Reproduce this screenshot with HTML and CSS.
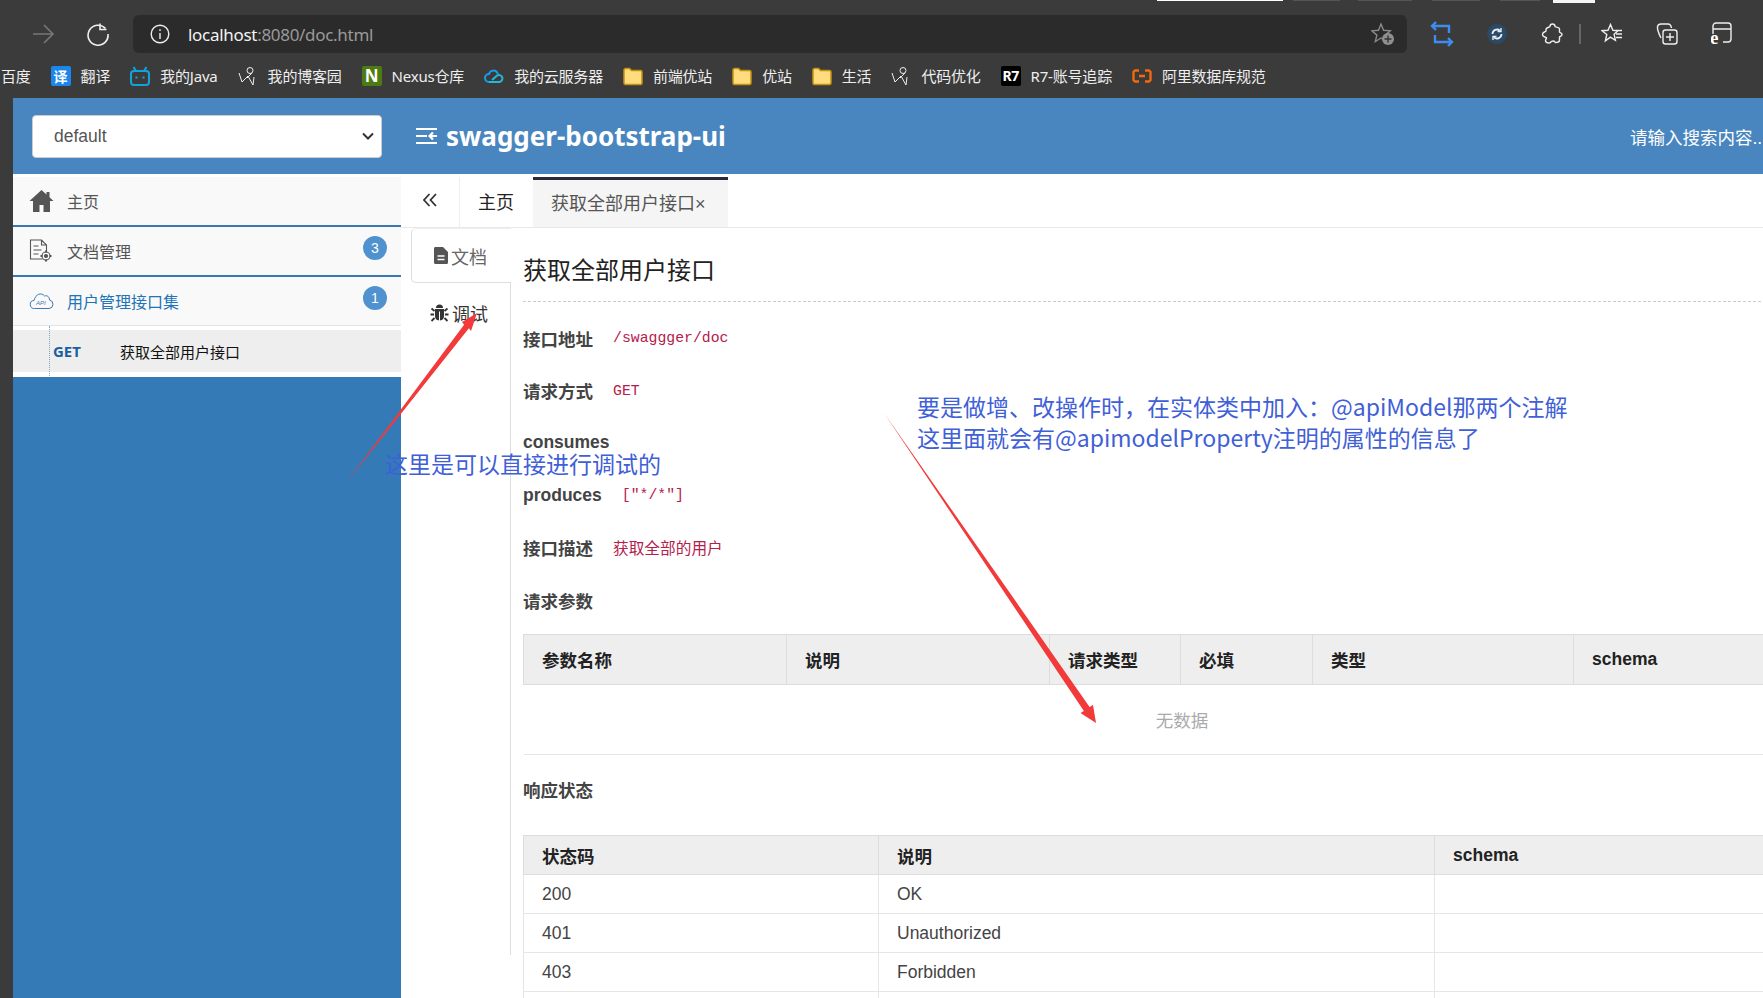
FILE: index.html
```html
<!DOCTYPE html>
<html lang="en">
<head>
    <meta charset="UTF-8">
    <meta name="viewport" content="width=device-width, initial-scale=1.0">
    <title>swagger-bootstrap-ui</title>
    <link rel="stylesheet" href="styles.css">
</head>
<body>

    <!-- Browser chrome -->
    <header class="chrome">
        <div class="tabstrip">
            <span class="sliver sliver-white"></span>
            <span class="sliver sliver-a"></span>
            <span class="sliver sliver-b"></span>
            <span class="sliver sliver-c"></span>
            <span class="sliver sliver-d"></span>
            <span class="sliver sliver-end"></span>
        </div>

        <div class="toolbar">
            <svg class="nav-back" width="24" height="24" viewBox="0 0 24 24" fill="none" stroke="#777" stroke-width="1.6"><path d="M2 12h20M13 3l9 9-9 9"/></svg>
            <svg class="nav-reload" width="24" height="24" viewBox="0 0 24 24" fill="none" stroke="#eee" stroke-width="1.6"><path d="M19.5 6.5A10 10 0 1 0 22 12"/><path d="M14 1.5v6h6.500"/></svg>
            <div class="address">
                <svg width="20" height="20" viewBox="0 0 20 20" fill="none" stroke="#eee" stroke-width="1.4"><circle cx="10" cy="10" r="8.800"/><path d="M10 9v6M10 5.200v1.800"/></svg>
                <span class="url"><b>localhost</b>:8080/doc.html</span>
                <svg class="add-fav" width="24" height="24" viewBox="0 0 24 24"><path d="M10 2l2.600 6.300 6.700.5-5.100 4.300 1.500 6.500L10 16l-5.700 3.600 1.600-6.500L.8 8.800l6.700-.5z" fill="none" stroke="#8a8a8a" stroke-width="1.400"/><circle cx="17" cy="17" r="6" fill="#8f8f8f"/><path d="M17 13.500v7M13.500 17h7" stroke="#333" stroke-width="1.400"/></svg>
            </div>
            <div class="tool-icons">
                <span class="tool"><svg width="24" height="26" viewBox="0 0 24 26" fill="none" stroke="#3f8cf0" stroke-width="2.400"><path d="M6 1L2 5l4 4M2 5h17v7M18 25l4-4-4-4M22 21H5v-7"/></svg></span>
                <span class="tool"><svg width="22" height="22" viewBox="0 0 22 22" fill="none"><circle cx="11" cy="11" r="10" fill="#2b4a66"/><path d="M6.500 11a4.500 4.500 0 0 1 7.500-3.300M15.500 11A4.500 4.500 0 0 1 8 14.300" stroke="#e8f0f6" stroke-width="1.800"/><path d="M15 5v3.500h-3.500M7 17v-3.500h3.500" stroke="#e8f0f6" stroke-width="1.400"/></svg></span>
                <span class="tool"><svg width="22" height="22" viewBox="0 0 22 22" fill="none" stroke="#eee" stroke-width="1.400"><path d="M9 3.500a2.500 2.500 0 0 1 5 0c0 .8 4.500.5 4.500 2.500v3c0 .8 2.500.3 2.500 2.500s-2.500 1.800-2.500 2.500v3c0 2-2 2.500-4 2.500-.8 0-.2-1.500-2.500-1.500S9.500 20 8.500 20c-2 0-4-.5-4-2.500 0-.8 1-1.500 1-2.500s-4-.5-4-3.500 3.500-2.500 3.500-3.500V6.500C5 4 9 4.500 9 3.500z"/></svg></span>
                <span class="tool-divider"></span>
                <span class="tool"><svg width="22" height="22" viewBox="0 0 22 22" fill="none" stroke="#eee" stroke-width="1.400"><path d="M9.500 1.500l2.400 5.800 5 .4-3.800 3.600 1.300 6-5-3.200-5 3.800 1.400-6.400L1 7.700l6-.4zM15 11h6M15 7.500h6M15 14.500h6"/></svg></span>
                <span class="tool"><svg width="22" height="22" viewBox="0 0 22 22" fill="none" stroke="#eee" stroke-width="1.400"><path d="M5 15C2 9 1 7 1.500 3.500 2 1.500 3 1 5 1h7c2 0 3 1 3.500 4"/><rect x="7" y="7" width="14" height="14" rx="2.500"/><path d="M14 10v8M10 14h8"/></svg></span>
                <span class="tool"><svg width="22" height="24" viewBox="0 0 22 24" fill="none" stroke="#eee" stroke-width="1.400"><path d="M2 12V4a3 3 0 0 1 3-3h12a3 3 0 0 1 3 3v13a3 3 0 0 1-3 3h-5M2 7h18"/><text class="ie-mark" x="-1" y="22">e</text></svg></span>
            </div>
        </div>

        <nav class="bookmarks">
            <a class="mark">百度</a>
            <a class="mark">
                <span class="mark-square mark-fanyi">译</span>翻译
            </a>
            <a class="mark">
                <svg width="20" height="20" viewBox="0 0 20 20" fill="none" stroke="#10a3dc" stroke-width="2"><rect x="1" y="5" width="18" height="14" rx="3"/><path d="M6 5L3.500 1M14 5l2.500-4M6.500 10.500v2M13.500 10.500v2"/></svg>我的Java
            </a>
            <a class="mark">
                <svg class="cnblogs" width="20" height="20" viewBox="0 0 20 20" fill="none" stroke="#eee"><circle cx="12" cy="4.500" r="3"/><path d="M1 7l3 9 6-6 5 9 1-8M14 7l-5 5"/></svg>我的博客园
            </a>
            <a class="mark">
                <span class="mark-square mark-nexus">N</span>Nexus仓库
            </a>
            <a class="mark">
                <svg width="20" height="20" viewBox="0 0 20 20" fill="none" stroke-width="2"><path d="M5 16a4 4 0 0 1 0-8c1-4 7-5 9 0" stroke="#1a9be8"/><path d="M5 16h10a3.500 3.500 0 1 0-3-5.500L8 14" stroke="#27b7d8"/></svg>我的云服务器
            </a>
            <a class="mark">
                <svg width="20" height="20" viewBox="0 0 20 20"><use href="#folder"/></svg>前端优站
            </a>
            <a class="mark">
                <svg width="20" height="20" viewBox="0 0 20 20"><use href="#folder"/></svg>优站
            </a>
            <a class="mark">
                <svg width="20" height="20" viewBox="0 0 20 20"><use href="#folder"/></svg>生活
            </a>
            <a class="mark">
                <svg class="cnblogs" width="20" height="20" viewBox="0 0 20 20" fill="none" stroke="#eee"><circle cx="12" cy="4.500" r="3"/><path d="M1 7l3 9 6-6 5 9 1-8M14 7l-5 5"/></svg>代码优化
            </a>
            <a class="mark">
                <span class="mark-square mark-r7">R7</span>R7-账号追踪
            </a>
            <a class="mark">
                <svg width="20" height="20" viewBox="0 0 20 20" fill="none" stroke="#f26a0c" stroke-width="2.400"><path d="M7 4.500H3L1.500 6v8L3 15.500h4M13 4.500h4L18.500 6v8L17 15.500h-4M7 10h6"/></svg>阿里数据库规范
            </a>
        </nav>
    </header>

    <svg class="defs" width="0" height="0">
        <symbol id="folder" viewBox="0 0 20 20">
            <path d="M1 4a1.500 1.500 0 0 1 1.500-1.500h4L8.500 4.500h9A1.500 1.500 0 0 1 19 6v11a1.500 1.500 0 0 1-1.500 1.500h-15A1.500 1.500 0 0 1 1 17z" fill="#ffdc7d" stroke="#c3920f" stroke-width="1.500"/>
        </symbol>
    </svg>

    <div class="app">
        <div class="app-edge"></div>
        <div class="app-main">

            <!-- Swagger header -->
            <div class="topbar">
                <div class="group-select">
                    default
                    <svg width="12" height="8" viewBox="0 0 12 8" fill="none" stroke="#333" stroke-width="2"><path d="M1 1.500l5 5 5-5"/></svg>
                </div>
                <svg class="brand-icon" width="22" height="18" viewBox="0 0 22 18" fill="none" stroke="#fff" stroke-width="2.200"><path d="M0 2h21M0 9h11M0 16h21M21 9h-7M17 5.500L13.500 9l3.500 3.500"/></svg>
                <div class="brand">swagger-bootstrap-ui</div>
                <div class="search">请输入搜索内容...</div>
            </div>

            <div class="workspace">
                <!-- Sidebar -->
                <aside class="sidebar">
                    <div class="menu">
                        <div class="menu-row">
                            <svg width="24" height="22" viewBox="0 0 24 22" fill="#555"><path d="M12 0L0 11h3.500v11h6.500v-7h4v7h6.500V11H24l-4-3.700V2h-3v2.500z"/></svg>
                            <span>主页</span>
                        </div>
                        <div class="menu-row">
                            <svg width="24" height="24" viewBox="0 0 24 24" fill="none" stroke="#555" stroke-width="1.100"><path d="M13 20H1V1h11l5 5v6M12 1v5h5M4 7h5M4 11h8M4 15h5"/><circle cx="16.500" cy="17" r="4"/><circle cx="16.500" cy="17" r="1.500" fill="#555"/><path d="M16.500 11.500v2M16.500 20.500v2M11 17h2M20 17h2" stroke-width="2"/></svg>
                            <span>文档管理</span>
                            <em class="badge">3</em>
                        </div>
                        <div class="menu-row menu-row-open">
                            <svg width="24" height="18" viewBox="0 0 24 18" fill="none" stroke="#3d79b3" stroke-width="1"><path d="M5 16.500a4 4 0 0 1-.5-8C6 2 12 0 15 4c3-1 5 1 5 4a4.300 4.300 0 0 1-.5 8.500z"/><text class="api-mark" x="6.500" y="12.500">API</text></svg>
                            <span>用户管理接口集</span>
                            <em class="badge">1</em>
                        </div>
                        <div class="sub-list">
                            <div class="sub-item">
                                <strong>GET</strong>
                                <span>获取全部用户接口</span>
                            </div>
                        </div>
                    </div>
                </aside>

                <!-- Main panel -->
                <main class="panel">
                    <div class="tabs">
                        <div class="tab-toggle">
                            <svg width="14" height="14" viewBox="0 0 14 14" fill="none" stroke="#333" stroke-width="1.800"><path d="M6.500 1L1 7l5.500 6M13 1L7.500 7l5.500 6"/></svg>
                        </div>
                        <div class="tab">主页</div>
                        <div class="tab tab-active">获取全部用户接口×</div>
                    </div>

                    <div class="panel-body">
                        <div class="side-tabs">
                            <div class="side-tab side-tab-active">
                                <svg width="14" height="17" viewBox="0 0 14 17"><path d="M2 0h7l5 5v10.500a1.500 1.500 0 0 1-1.500 1.500h-11A1.500 1.500 0 0 1 0 15.500v-14A1.500 1.500 0 0 1 2 0z" fill="#555"/><path d="M3.500 9h7M3.500 12.500h7" stroke="#fff" stroke-width="1.600"/></svg>文档
                            </div>
                            <div class="side-tab">
                                <svg width="19" height="19" viewBox="0 0 19 19" fill="#333"><path d="M6 5a3.500 3.500 0 0 1 7 0z"/><path d="M5 6h9v7a4.500 4.500 0 0 1-4 4.500V8.500H9v9A4.500 4.500 0 0 1 5 13z"/><path d="M4.500 8L1.500 5.500M14.500 8l3-2.500M4 11.500H.5M15 11.500h3.500M4.500 15l-3 3M14.500 15l3 3" stroke="#333" stroke-width="1.800"/></svg>调试
                            </div>
                        </div>

                        <div class="doc">
                            <h1>获取全部用户接口</h1>

                            <div class="doc-rows">
                                <div class="doc-row"><label>接口地址</label><code>/swaggger/doc</code></div>
                                <div class="doc-row"><label>请求方式</label><code>GET</code></div>
                                <div class="doc-row"><label>consumes</label></div>
                                <div class="doc-row"><label>produces</label><code>["*/*"]</code></div>
                                <div class="doc-row"><label>接口描述</label><code class="doc-text">获取全部的用户</code></div>
                                <div class="doc-row"><label>请求参数</label></div>
                            </div>

                            <table class="params">
                                <colgroup>
                                    <col class="col-263"><col class="col-263"><col class="col-131"><col class="col-132"><col class="col-261"><col>
                                </colgroup>
                                <thead>
                                    <tr><th>参数名称</th><th>说明</th><th>请求类型</th><th>必填</th><th>类型</th><th>schema</th></tr>
                                </thead>
                                <tbody>
                                    <tr><td class="empty" colspan="6">无数据</td></tr>
                                </tbody>
                            </table>

                            <div class="section-title">响应状态</div>

                            <table class="status">
                                <colgroup>
                                    <col class="col-355"><col class="col-556"><col>
                                </colgroup>
                                <thead>
                                    <tr><th>状态码</th><th>说明</th><th>schema</th></tr>
                                </thead>
                                <tbody>
                                    <tr><td>200</td><td>OK</td><td></td></tr>
                                    <tr><td>401</td><td>Unauthorized</td><td></td></tr>
                                    <tr><td>403</td><td>Forbidden</td><td></td></tr>
                                    <tr><td>404</td><td>Not Found</td><td></td></tr>
                                </tbody>
                            </table>
                        </div>
                    </div>
                </main>
            </div>
        </div>
    </div>

    <!-- Notes drawn over the screenshot -->
    <svg class="arrows" width="1763" height="998" viewBox="0 0 1763 998">
        <polygon points="346,483 464.100,324.700 462,322 477,313 471,331 468.900,328.300"/>
        <polygon points="884,413 1089.600,707 1093,705 1096,723 1080.500,713 1083.900,711"/>
    </svg>
    <div class="note note-debug">这里是可以直接进行调试的</div>
    <div class="note note-model">要是做增、改操作时，在实体类中加入：@apiModel那两个注解<br>这里面就会有@apimodelProperty注明的属性的信息了</div>

</body>
</html>
```

FILE: styles.css
```css
/* Reset some default browser styles */
* {
    box-sizing: border-box;
}

body, h1 {
    margin: 0;
    padding: 0;
}

body {
    width: 1763px;
    height: 998px;
    overflow: hidden;
    position: relative;
    font-family: "Liberation Sans", "Noto Sans CJK SC", sans-serif;
    background-color: #fff;
    color: #333;
}

.defs {
    display: block;
    height: 0;
}

/* Browser chrome */
.chrome {
    height: 98px;
    background-color: #3b3b3b;
    font-family: "Noto Sans", "Noto Sans CJK SC", sans-serif;
    color: #eee;
}

.tabstrip {
    height: 15px;
    display: flex;
    align-items: flex-start;
    padding-left: 1157px;
}

.sliver {
    height: 1px;
    background-color: #555;
}

.sliver-white { width: 126px; background-color: #fff; }
.sliver-a { width: 47px; margin-left: 10px; }
.sliver-b { width: 54px; margin-left: 18px; }
.sliver-c { width: 48px; margin-left: 20px; }
.sliver-d { width: 40px; margin-left: 20px; }
.sliver-end { width: 42px; height: 3px; margin-left: 13px; background-color: #f4f4f4; }

.toolbar {
    height: 38px;
    display: flex;
    align-items: center;
    padding-left: 31px;
}

.nav-reload {
    margin-left: 31px;
    margin-right: 23px;
}

.address {
    width: 1274px;
    height: 38px;
    display: flex;
    align-items: center;
    padding: 0 10px 0 17px;
    background-color: #2b2b2b;
    border-radius: 6px;
}

.url {
    margin-left: 18px;
    font-size: 17px;
    letter-spacing: -0.3px;
    color: #9a9a9a;
}

.url b {
    font-weight: 400;
    color: #f2f2f2;
}

.add-fav {
    margin-left: auto;
    margin-right: 2px;
}

.tool-icons {
    display: flex;
    align-items: center;
    margin-left: 7px;
}

.tool {
    width: 55px;
    display: flex;
    justify-content: center;
}

.tool-divider {
    width: 5px;
    height: 20px;
    border-left: 2px solid #666;
    margin-left: 0;
    background-clip: padding-box;
}

.ie-mark {
    font: bold 19px "Liberation Serif", serif;
    fill: #fff;
    stroke: none;
}

.bookmarks {
    height: 45px;
    display: flex;
    align-items: center;
    gap: 20px;
    padding-left: 1px;
    font-size: 15px;
    letter-spacing: -0.2px;
    white-space: nowrap;
}

.mark {
    display: flex;
    align-items: center;
    gap: 10px;
}

.mark-square {
    width: 20px;
    height: 20px;
    display: flex;
    align-items: center;
    justify-content: center;
    border-radius: 2px;
    font-weight: 700;
    font-size: 14px;
    letter-spacing: 0;
    color: #fff;
}

.mark-fanyi { background-color: #1c87ea; }
.mark-nexus { background-color: #4d7a12; font-size: 17px; }
.mark-r7 { background-color: #000; font-size: 14px; letter-spacing: -0.5px; }

/* Page below the chrome */
.app {
    height: 900px;
    display: flex;
}

.app-edge {
    width: 13px;
    background-color: #3b3b3b;
}

.app-main {
    flex: 1;
    min-width: 0;
    display: flex;
    flex-direction: column;
}

.topbar {
    height: 76px;
    flex-shrink: 0;
    display: flex;
    align-items: center;
    padding-left: 19px;
    background-color: #4986bf;
    color: #fff;
}

.group-select {
    width: 350px;
    height: 43px;
    display: flex;
    align-items: center;
    justify-content: space-between;
    padding: 0 7px 0 21px;
    background-color: #fff;
    border: 1px solid #ccc;
    border-radius: 4px;
    font-size: 17.500px;
    color: #555;
}

.brand-icon {
    margin-left: 34px;
}

.brand {
    margin-left: 8px;
    font-family: "Noto Sans", sans-serif;
    font-size: 26px;
    font-weight: 700;
}

.search {
    width: 133px;
    margin-left: auto;
    font-size: 17.500px;
    white-space: nowrap;
    overflow: hidden;
}

.workspace {
    flex: 1;
    min-height: 0;
    display: flex;
}

/* Sidebar */
.sidebar {
    width: 388px;
    flex-shrink: 0;
    background-color: #337ab7;
}

.menu {
    padding: 3px 0 5px;
    background-color: #fff;
}

.menu-row {
    height: 50px;
    display: flex;
    align-items: center;
    padding: 0 14px 0 16px;
    background-color: #f9f9f9;
    border-bottom: 2px solid #3c78ae;
    font-size: 16px;
    color: #555;
}

.menu-row span {
    margin-left: 13px;
}

.menu-row svg {
    width: 25px;
}

.menu-row-open {
    height: 49px;
    border-bottom: 1px solid #e4e4e4;
    color: #2274b8;
}

.badge {
    width: 24px;
    height: 24px;
    margin-left: auto;
    margin-top: -6px;
    border-radius: 50%;
    background-color: #4f92cf;
    color: #fff;
    font: 14px/24px "Liberation Sans", sans-serif;
    text-align: center;
}

.api-mark {
    font: italic 6px "Liberation Sans", sans-serif;
    fill: #3d79b3;
    stroke: none;
}

.sub-list {
    position: relative;
    padding-top: 4px;
}

.sub-list::before {
    content: "";
    position: absolute;
    left: 36px;
    top: 0;
    bottom: -4px;
    border-left: 1px dotted #7ba4c9;
}

.sub-item {
    height: 42px;
    display: flex;
    align-items: center;
    padding-left: 40px;
    background-color: #eee;
    font-size: 15px;
    color: #111;
}

.sub-item strong {
    width: 67px;
    font-family: "Noto Sans", sans-serif;
    font-size: 15px;
    color: #1c5f9e;
}

/* Main panel */
.panel {
    flex: 1;
    min-width: 0;
    overflow: hidden;
}

.tabs {
    height: 54px;
    display: flex;
    padding-top: 3px;
    border-bottom: 1px solid #e8e8e8;
    font-size: 18px;
}

.tab-toggle {
    width: 59px;
    display: flex;
    align-items: center;
    justify-content: center;
    padding-bottom: 5px;
    border-right: 1px solid #eee;
}

.tab {
    display: flex;
    align-items: center;
    padding: 0 19px 3px 18px;
    color: #222;
}

.tab-active {
    width: 195px;
    margin-top: 0;
    background-color: #f5f5f5;
    border-top: 3px solid #2a2b36;
    color: #555;
}

.panel-body {
    display: flex;
    align-items: flex-start;
}

.side-tabs {
    width: 110px;
    height: 727px;
    flex-shrink: 0;
    padding-left: 10px;
    border-right: 1px solid #ddd;
}

.side-tab {
    height: 55px;
    display: flex;
    align-items: center;
    gap: 3px;
    padding-left: 22px;
    font-size: 18px;
    color: #333;
}

.side-tab + .side-tab {
    padding-left: 19px;
    padding-top: 4px;
}

.side-tab-active {
    width: 100px;
    background-color: #fff;
    border: 1px solid #ddd;
    border-right: 0;
    border-top-color: #eee;
    border-radius: 5px 0 0 5px;
    color: #666;
}

.doc {
    margin-left: 12px;
    width: 1318px;
    flex-shrink: 0;
}

.doc h1 {
    height: 74px;
    padding-top: 25px;
    border-bottom: 1px dashed #ccc;
    font-size: 24px;
    line-height: 35px;
    font-weight: 400;
    color: #222;
}

.doc-rows {
    margin-top: 10px;
}

.doc-row {
    height: 52.400px;
    display: flex;
    align-items: center;
    font-size: 17.500px;
    font-weight: 700;
    color: #444;
}

.doc-row label {
    margin-right: 20px;
}

.doc-row code {
    font-family: "Liberation Mono", monospace;
    font-size: 14.800px;
    font-weight: 400;
    color: #b5204a;
}

.doc-row .doc-text {
    font-family: "Noto Sans CJK SC", sans-serif;
    font-size: 15.700px;
}

table {
    width: 1318px;
    table-layout: fixed;
    border-collapse: collapse;
    font-size: 17.500px;
}

th, td {
    padding: 0 18px;
    text-align: left;
    border: 1px solid #e6e6e6;
}

th {
    background-color: #eee;
    border-color: #ddd;
    color: #222;
}

.col-263 { width: 263px; }
.col-131 { width: 131px; }
.col-132 { width: 132px; }
.col-261 { width: 261px; }
.col-355 { width: 355px; }
.col-556 { width: 556px; }

.params {
    margin-top: 8px;
}

.params th {
    height: 50px;
}

.params .empty {
    height: 70px;
    text-align: center;
    color: #aaa;
    border-width: 0 0 1px;
}

.section-title {
    height: 52px;
    margin-top: 8px;
    display: flex;
    align-items: center;
    font-size: 17.500px;
    font-weight: 700;
    color: #444;
}

.status {
    margin-top: 20px;
}

.status th,
.status td {
    height: 39px;
}

.status td {
    color: #444;
}

/* Notes over the screenshot */
.arrows {
    position: absolute;
    left: 0;
    top: 0;
    pointer-events: none;
}

.arrows polygon {
    fill: #f23a3a;
}

.note {
    position: absolute;
    font-family: "Noto Sans CJK SC", sans-serif;
    font-size: 23px;
    line-height: 31px;
    color: #3f60d6;
    white-space: nowrap;
}

.note-debug {
    left: 385px;
    top: 448px;
}

.note-model {
    left: 917px;
    top: 391px;
}
```
